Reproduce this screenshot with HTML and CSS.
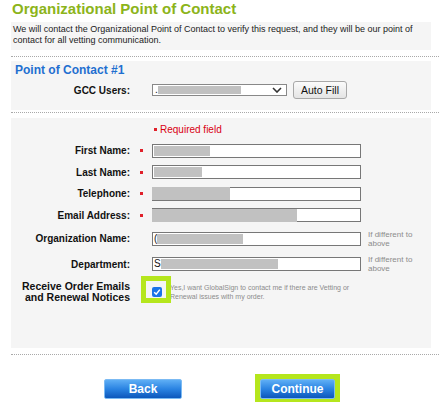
FILE: index.html
```html
<!DOCTYPE html>
<html lang="en">
<head>
    <meta charset="UTF-8">
    <meta name="viewport" content="width=device-width, initial-scale=1.0">
    <title>Organizational Point of Contact</title>
    <link rel="stylesheet" href="styles.css">
</head>
<body>
    <div class="page">
        <h1 class="page-title">Organizational Point of Contact</h1>
        <p class="intro">We will contact the Organizational Point of Contact to verify this request, and they will be our point of contact for all vetting communication.</p>

        <hr class="divider">

        <div class="panel panel-contact">
            <h2 class="panel-title">Point of Contact #1</h2>
            <div class="gcc-row">
                <span class="field-label gcc-label">GCC Users:</span>
                <div class="fake-select">
                    <span class="lead-char">.</span>
                    <span class="redact" style="width: 83px"></span>
                    <svg class="chevron" width="10" height="6" viewBox="0 0 10 6">
                        <path d="M1 1 L5 5 L9 1" fill="none" stroke="#333" stroke-width="1.6"/>
                    </svg>
                </div>
                <button class="btn-plain">Auto Fill</button>
            </div>
        </div>

        <hr class="divider">

        <div class="panel panel-form">
            <div class="form-rows">
                <div class="form-row">
                    <span></span>
                    <span></span>
                    <span class="req-note"><i class="req-mark"></i>Required field</span>
                </div>

                <div class="form-row">
                    <span class="field-label">First Name:</span>
                    <i class="req-mark"></i>
                    <div class="field"><span class="redact" style="width: 56px"></span></div>
                </div>

                <div class="form-row">
                    <span class="field-label">Last Name:</span>
                    <i class="req-mark"></i>
                    <div class="field"><span class="redact" style="width: 48px"></span></div>
                </div>

                <div class="form-row">
                    <span class="field-label">Telephone:</span>
                    <i class="req-mark"></i>
                    <div class="field"><span class="redact redact-full" style="width: 78px"></span></div>
                </div>

                <div class="form-row">
                    <span class="field-label">Email Address:</span>
                    <i class="req-mark"></i>
                    <div class="field"><span class="redact redact-full" style="width: 145px"></span></div>
                </div>

                <div class="form-row row-tall">
                    <span class="field-label">Organization Name:</span>
                    <span></span>
                    <div class="field"><span class="lead-char">(</span><span class="redact" style="width: 86px"></span></div>
                    <span class="hint">If different to<br>above</span>
                </div>

                <div class="form-row row-tall">
                    <span class="field-label">Department:</span>
                    <span></span>
                    <div class="field"><span class="lead-char">S</span><span class="redact" style="width: 117px"></span></div>
                    <span class="hint">If different to<br>above</span>
                </div>

                <div class="form-row row-check">
                    <span class="field-label">Receive Order Emails<br>and Renewal Notices</span>
                    <span></span>
                    <div class="check-wrap">
                        <span class="checkbox">
                            <svg width="8" height="8" viewBox="0 0 8 8">
                                <path d="M1.2 4.2 L3.2 6.2 L6.8 1.6" fill="none" stroke="#fff" stroke-width="1.5"/>
                            </svg>
                            <span class="marker"></span>
                        </span>
                        <span class="check-text">Yes,I want GlobalSign to contact me if there are Vetting or Renewal issues with my order.</span>
                    </div>
                </div>
            </div>
        </div>

        <hr class="divider">

        <div class="actions">
            <button class="btn-blue btn-back">Back</button>
            <span class="highlight">
                <button class="btn-blue btn-continue">Continue</button>
            </span>
        </div>
    </div>
</body>
</html>
```

FILE: styles.css
```css
* {
    margin: 0;
    padding: 0;
    box-sizing: border-box;
}

body {
    font-family: 'Liberation Sans', Arial, sans-serif;
    background: #fff;
    color: #111;
}

.page {
    padding-left: 11px;
    width: 439px;
}

.page-title {
    font-size: 15px;
    line-height: 18px;
    font-weight: bold;
    color: #8cb41a;
    padding-left: 1px;
}

.intro {
    margin-top: 4px;
    width: 420px;
    background: #f5f5f5;
    padding: 2px 2px 4px 2px;
    font-size: 9px;
    line-height: 11px;
    color: #222;
}

.divider {
    border: none;
    border-top: 1px dotted #a9a9a9;
    margin: 6px 0 4px;
}

.divider + .panel-form {
    margin-top: 5px;
}

.panel {
    width: 420px;
    background: #f5f5f5;
}

/* Point of contact block */
.panel-contact {
    padding: 2px 0 11px 4px;
}

.panel-contact + .divider {
    margin-top: 2px;
}

.panel-title {
    font-size: 12px;
    line-height: 14px;
    font-weight: bold;
    color: #1f6fd0;
}

.gcc-row {
    display: flex;
    align-items: center;
    height: 18px;
    margin-top: 4px;
}

.field-label {
    font-size: 10px;
    line-height: 11px;
    font-weight: bold;
    text-align: right;
    color: #111;
}

.gcc-label {
    width: 115px;
    margin-right: 22px;
}

.fake-select {
    width: 135px;
    height: 12px;
    border: 1px solid #888;
    background: #fff;
    display: flex;
    align-items: center;
    padding-left: 2px;
}

.fake-select .redact {
    height: 8px;
}

.chevron {
    margin-left: auto;
    margin-right: 4px;
}

.btn-plain {
    margin-left: 6px;
    width: 54px;
    height: 18px;
    font-family: 'Liberation Sans', Arial, sans-serif;
    font-size: 10.5px;
    color: #111;
    background: linear-gradient(#fbfbfb, #e4e4e4);
    border: 1px solid #a8a8a8;
    border-radius: 3px;
}

/* Main form */
.panel-form {
    padding: 4px 0 45px;
}

.form-rows {
    display: flex;
    flex-direction: column;
    gap: 7.5px;
}

.form-row {
    display: grid;
    grid-template-columns: 119px 22px 209px auto;
    align-items: center;
    min-height: 14px;
}

.row-tall {
    min-height: 18px;
}

.req-mark {
    display: block;
    width: 3px;
    height: 3px;
    background: #e0202a;
    justify-self: center;
}

.req-note {
    display: flex;
    align-items: center;
    font-size: 10px;
    color: #d90012;
}

.req-note .req-mark {
    margin: 1px 3px 0 2px;
}

.field {
    height: 14px;
    border: 1px solid #777;
    background: #fff;
    display: flex;
    align-items: center;
    padding-left: 1px;
}

.redact {
    display: block;
    height: 10px;
    background: #c1c1c1;
}

.redact-full {
    height: 13px;
    margin-left: -2px;
}

.lead-char {
    font-size: 10px;
    line-height: 10px;
    color: #111;
}

.hint {
    padding-left: 7px;
    font-size: 8px;
    line-height: 9px;
    color: #8c8c8c;
}

.row-check .field-label {
    font-size: 10.5px;
}

.check-wrap {
    grid-column: 3 / span 2;
    display: flex;
    align-items: center;
}

.checkbox {
    position: relative;
    width: 10px;
    height: 10px;
    border-radius: 2px;
    background: #1a73e8;
    display: flex;
    align-items: center;
    justify-content: center;
    flex-shrink: 0;
}

/* lime annotation frame drawn over the checkbox */
.checkbox .marker {
    position: absolute;
    left: -11px;
    top: -11px;
    width: 30px;
    height: 27px;
    border: 5px solid #b5e61d;
}

.check-text {
    margin-left: 8px;
    width: 195px;
    font-size: 7px;
    line-height: 9px;
    color: #8c8c8c;
}

/* Bottom buttons */
.actions {
    display: flex;
    align-items: flex-start;
    justify-content: center;
    gap: 73px;
    margin-top: 19px;
    margin-left: -11px;
    padding-left: 5px;
}

.btn-blue {
    display: block;
    height: 20px;
    font-family: 'Liberation Sans', Arial, sans-serif;
    font-size: 12px;
    font-weight: bold;
    color: #fff;
    background: linear-gradient(#5eaef5 0%, #2a83e2 50%, #0d57bb 100%);
    border: 1px solid #7bbaf3;
    border-radius: 2px;
}

.btn-back {
    width: 78px;
    margin-top: 5px;
}

.highlight {
    display: block;
    background: #b5e61d;
    padding: 5px 5px 3px;
}

.btn-continue {
    width: 75px;
}
```
